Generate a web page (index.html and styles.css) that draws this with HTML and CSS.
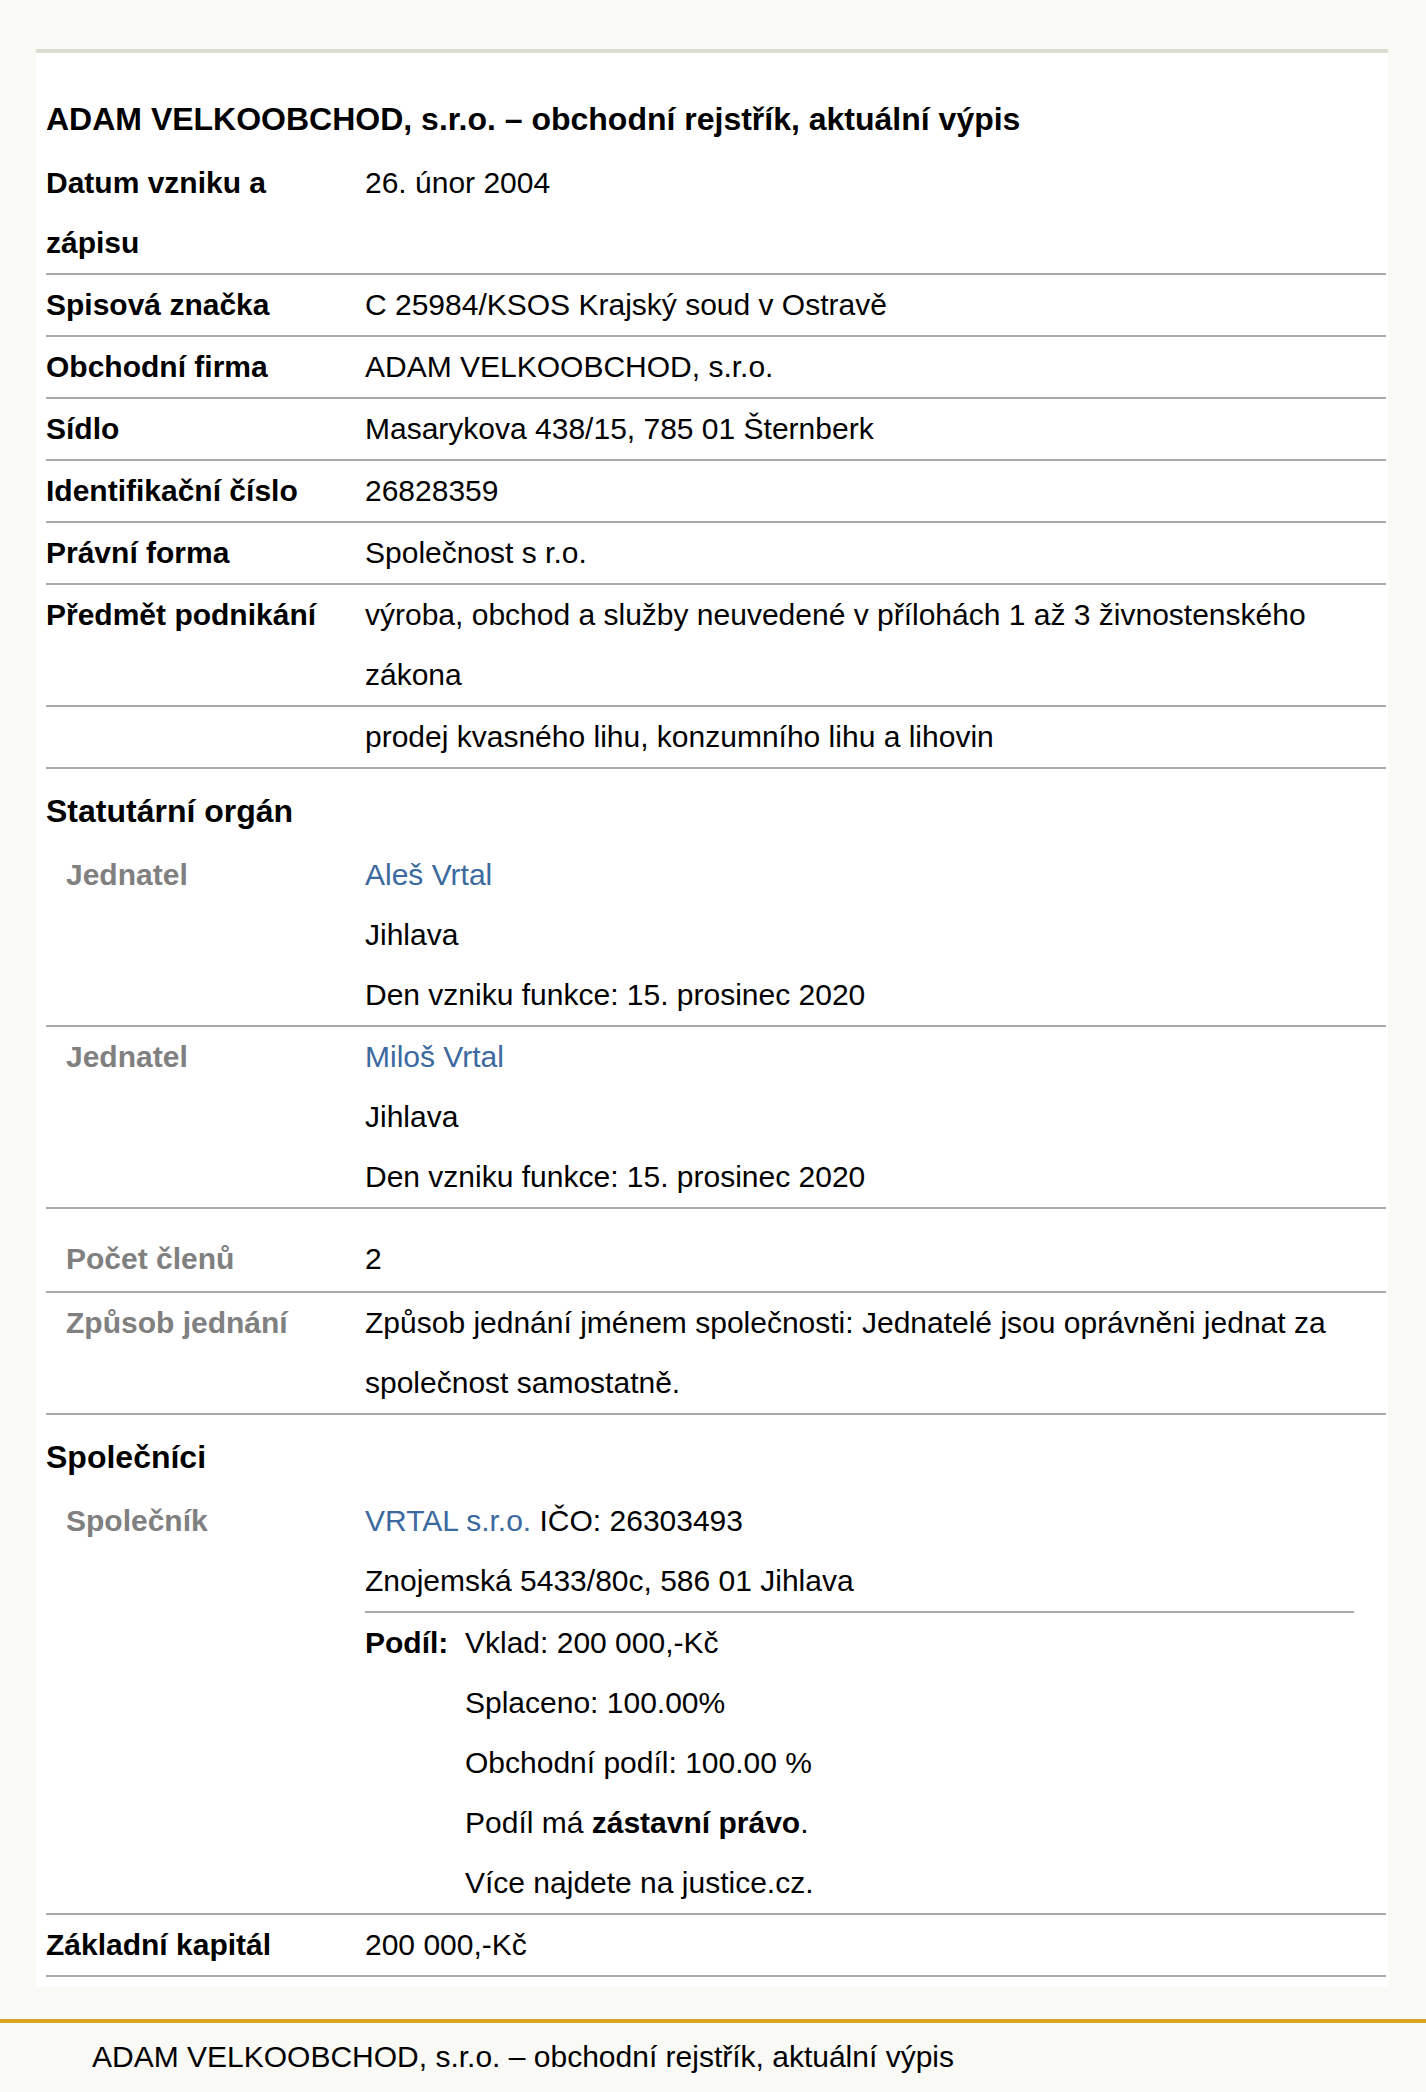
FILE: index.html
```html
<!DOCTYPE html>
<html lang="cs">
<head>
    <meta charset="UTF-8">
    <meta name="viewport" content="width=device-width, initial-scale=1.0">
    <title>ADAM VELKOOBCHOD, s.r.o. – obchodní rejstřík</title>
    <link rel="stylesheet" href="styles.css">
</head>
<body>
    <div class="card">
        <h1 class="title">ADAM VELKOOBCHOD, s.r.o. – obchodní rejstřík, aktuální výpis</h1>

        <div class="row">
            <div class="label">Datum vzniku a zápisu</div>
            <div class="value">26. únor 2004</div>
        </div>
        <div class="row">
            <div class="label">Spisová značka</div>
            <div class="value">C 25984/KSOS Krajský soud v Ostravě</div>
        </div>
        <div class="row">
            <div class="label">Obchodní firma</div>
            <div class="value">ADAM VELKOOBCHOD, s.r.o.</div>
        </div>
        <div class="row">
            <div class="label">Sídlo</div>
            <div class="value">Masarykova 438/15, 785 01 Šternberk</div>
        </div>
        <div class="row">
            <div class="label">Identifikační číslo</div>
            <div class="value">26828359</div>
        </div>
        <div class="row">
            <div class="label">Právní forma</div>
            <div class="value">Společnost s r.o.</div>
        </div>
        <div class="row">
            <div class="label">Předmět podnikání</div>
            <div class="value">výroba, obchod a služby neuvedené v přílohách 1 až 3 živnostenského zákona</div>
        </div>
        <div class="row">
            <div class="label"></div>
            <div class="value">prodej kvasného lihu, konzumního lihu a lihovin</div>
        </div>

        <h2 class="section">Statutární orgán</h2>

        <div class="row sub">
            <div class="label">Jednatel</div>
            <div class="value">
                <a href="#">Aleš Vrtal</a><br>
                Jihlava<br>
                Den vzniku funkce: 15. prosinec 2020
            </div>
        </div>
        <div class="row sub">
            <div class="label">Jednatel</div>
            <div class="value">
                <a href="#">Miloš Vrtal</a><br>
                Jihlava<br>
                Den vzniku funkce: 15. prosinec 2020
            </div>
        </div>
        <div class="row sub spaced">
            <div class="label">Počet členů</div>
            <div class="value">2</div>
        </div>
        <div class="row sub">
            <div class="label">Způsob jednání</div>
            <div class="value">Způsob jednání jménem společnosti: Jednatelé jsou oprávněni jednat za společnost samostatně.</div>
        </div>

        <h2 class="section">Společníci</h2>

        <div class="row sub">
            <div class="label">Společník</div>
            <div class="value">
                <a href="#">VRTAL s.r.o.</a> IČO: 26303493<br>
                Znojemská 5433/80c, 586 01 Jihlava
                <div class="share">
                    <div class="share-label">Podíl:</div>
                    <div class="share-value">
                        Vklad: 200 000,-Kč<br>
                        Splaceno: 100.00%<br>
                        Obchodní podíl: 100.00 %<br>
                        Podíl má <strong>zástavní právo</strong>.<br>
                        Více najdete na justice.cz.
                    </div>
                </div>
            </div>
        </div>
        <div class="row">
            <div class="label">Základní kapitál</div>
            <div class="value">200 000,-Kč</div>
        </div>
    </div>

    <footer>
        ADAM VELKOOBCHOD, s.r.o. – obchodní rejstřík, aktuální výpis
    </footer>
</body>
</html>
```

FILE: styles.css
```css
body {
    margin: 0;
    padding: 49px 0 0 0;
    background-color: #f9f9f5;
    font-family: "Liberation Sans", Arial, sans-serif;
    font-size: 30px;
    color: #000;
}

.card {
    margin: 0 38px 0 36px;
    padding: 0 2px 10px 10px;
    background-color: #ffffff;
    border-top: 4px solid #dcdcd0;
}

.title {
    margin: 36px 0 4px 0;
    font-size: 32px;
    line-height: 60px;
    font-weight: bold;
}

.section {
    margin: 0;
    padding: 12px 0 4px 0;
    font-size: 32px;
    line-height: 60px;
    font-weight: bold;
}

.row {
    display: grid;
    grid-template-columns: 319px 1fr;
    line-height: 60px;
    border-bottom: 2px solid #aaaaaa;
}

.row .label {
    font-weight: bold;
    padding-right: 19px;
}

.row.sub .label {
    padding-left: 20px;
    color: #808080;
}

.row.spaced {
    padding: 20px 0 2px 0;
}

.value a {
    color: #3b69a0;
    text-decoration: none;
}

.share {
    display: grid;
    grid-template-columns: 100px 1fr;
    margin-right: 32px;
    border-top: 2px solid #aaaaaa;
}

.share-label {
    font-weight: bold;
}

footer {
    margin-top: 32px;
    padding: 4px 0 30px 92px;
    line-height: 60px;
    border-top: 4px solid #daa520;
}
```
